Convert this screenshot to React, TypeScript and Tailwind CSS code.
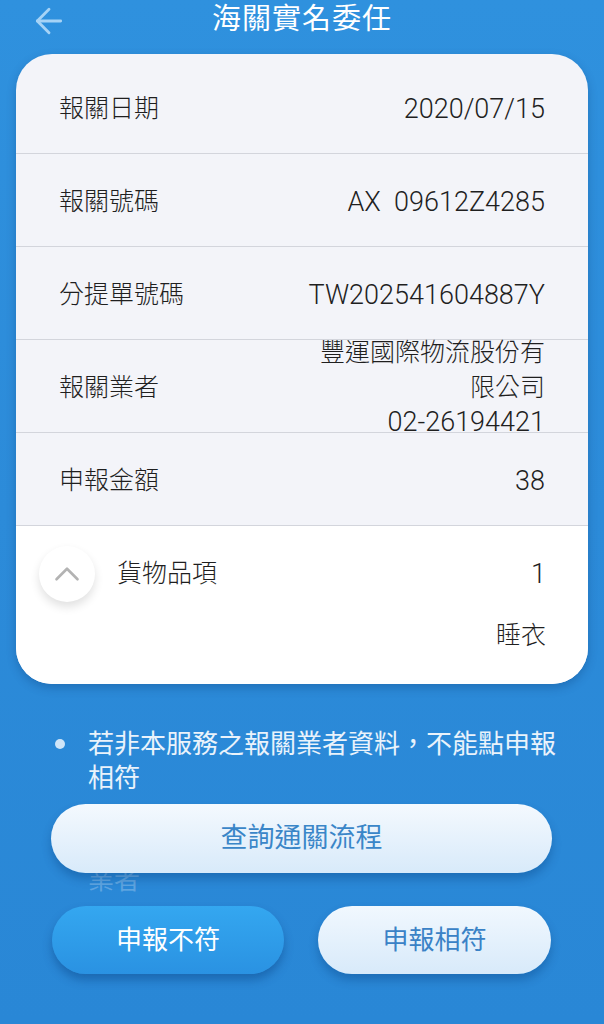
import { ArrowLeft, ChevronUp } from "lucide-react";

const font = { fontFamily: '"Roboto", "Noto Sans CJK TC", sans-serif' };

const rows = [
  { label: "報關日期", value: "2020/07/15" },
  { label: "報關號碼", value: "AX  09612Z4285" },
  { label: "分提單號碼", value: "TW202541604887Y" },
];

function Row({ label, children }: { label: string; children: React.ReactNode }) {
  return (
    <div className="h-[93px] flex items-center justify-between px-[43px] pt-[4px] border-b border-[#d3d5dc]">
      <span className="text-[25px] font-light text-[#1f1f1f]">{label}</span>
      {children}
    </div>
  );
}

export default function App() {
  return (
    <div
      className="w-[604px] h-[1024px] overflow-hidden bg-gradient-to-b from-[#2f91de] via-[#2c8bd9] to-[#2987d6]"
      style={font}
    >
      {/* Header */}
      <div className="relative h-[38px] flex items-center justify-center">
        <ArrowLeft className="absolute left-[29px] top-[1px] w-[40px] h-[40px] text-[#a6d3f6]" strokeWidth={1.7} />
        <h1 className="text-[29px] leading-none text-white tracking-[1px]">海關實名委任</h1>
      </div>

      {/* Card */}
      <div className="mx-[16px] mt-[16px] rounded-[36px] overflow-hidden bg-[#f3f4f9] shadow-[0_4px_10px_rgba(0,40,90,0.25)]">
        <div className="pt-[7px]">
          {rows.map((r) => (
            <Row key={r.label} label={r.label}>
              <span className="text-[27px] font-light text-[#1f1f1f] whitespace-pre">{r.value}</span>
            </Row>
          ))}
          <Row label="報關業者">
            <div className="w-[236px] text-right text-[25px] leading-[34.5px] font-light text-[#1f1f1f]">
              <div>豐運國際物流股份有限公司</div>
              <div className="text-[27px]">02-26194421</div>
            </div>
          </Row>
          <Row label="申報金額">
            <span className="text-[27px] font-light text-[#1f1f1f]">38</span>
          </Row>
        </div>

        <div className="bg-white pt-[14px] pb-[20px]">
          <div className="h-[68px] flex items-center pl-[23px] pr-[42px]">
            <div className="w-[56px] h-[56px] rounded-full bg-white shadow-[0_5px_10px_rgba(0,0,0,0.12)] flex items-center justify-center">
              <ChevronUp className="w-[42px] h-[42px] text-[#b3b3b3]" strokeWidth={1.5} />
            </div>
            <span className="ml-[22px] text-[25px] font-light text-[#1f1f1f]">貨物品項</span>
            <span className="ml-auto text-[27px] font-light text-[#1f1f1f]">1</span>
          </div>
          <div className="h-[56px] flex items-center justify-end pr-[42px]">
            <span className="text-[25px] font-light text-[#1f1f1f]">睡衣</span>
          </div>
        </div>
      </div>

      {/* Notes with overlaying button */}
      <div className="relative mt-[43px]">
        <div className="flex pl-[55px] text-[26px] leading-[34px] text-white/90">
          <span className="w-[33px] flex items-center h-[34px]">
            <span className="w-[10px] h-[10px] rounded-full bg-[#cfe5f8]" />
          </span>
          <p className="w-[470px]">若非本服務之報關業者資料，不能點申報相符</p>
        </div>
        <p className="mt-[68px] pl-[88px] text-[26px] leading-[34px] text-white/25">業者</p>

        <button className="absolute left-[51px] top-[77px] w-[501px] h-[69px] rounded-full bg-gradient-to-b from-[#f4f9fe] to-[#d8eafa] shadow-[0_6px_10px_rgba(0,50,110,0.3)] text-[27px] text-[#3a86c8]">
          查詢通關流程
        </button>
      </div>

      {/* Bottom actions */}
      <div className="mt-[9px] flex gap-[34px] pl-[52px]">
        <button className="w-[232px] h-[68px] rounded-full bg-gradient-to-b from-[#34a7f0] to-[#2a92e2] shadow-[0_6px_10px_rgba(0,50,110,0.35)] text-[26px] text-white">
          申報不符
        </button>
        <button className="w-[233px] h-[68px] rounded-full bg-gradient-to-b from-[#f1f8fe] to-[#d8eafa] shadow-[0_6px_10px_rgba(0,50,110,0.3)] text-[26px] text-[#3a82c6]">
          申報相符
        </button>
      </div>
    </div>
  );
}
